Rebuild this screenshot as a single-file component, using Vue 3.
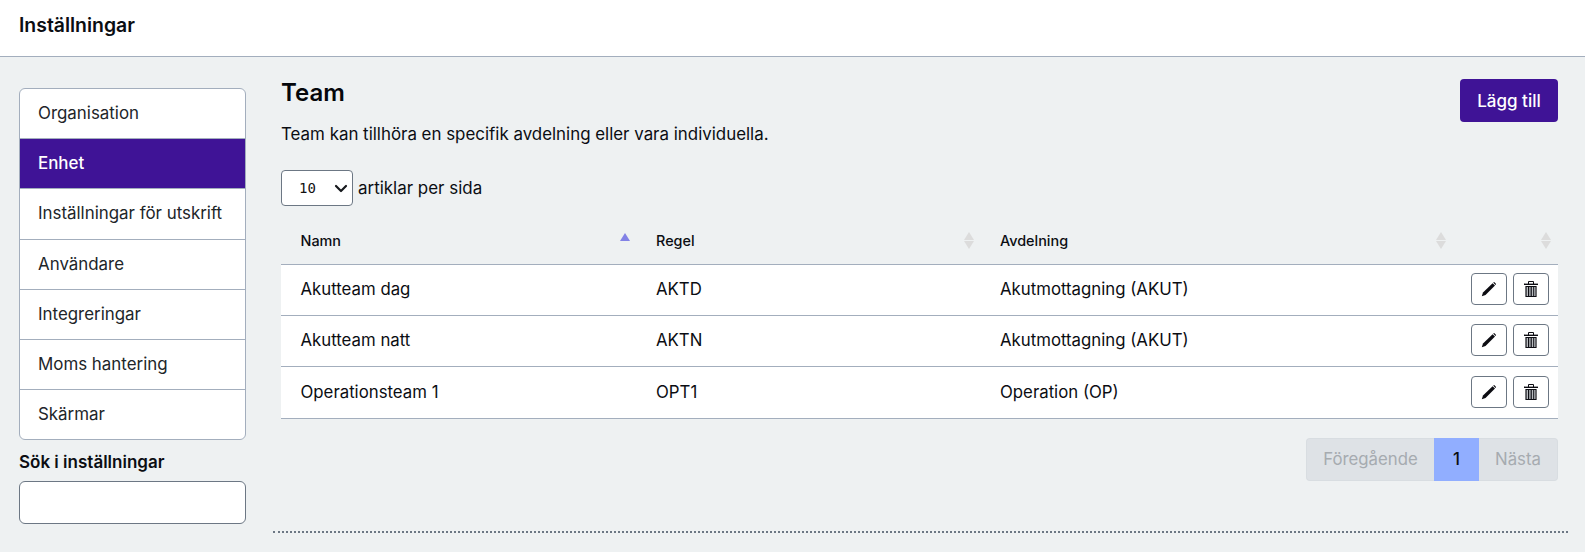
<script setup>
const nav = ['Organisation', 'Enhet', 'Inställningar för utskrift', 'Användare', 'Integreringar', 'Moms hantering', 'Skärmar']
const rows = [
  { name: 'Akutteam dag', rule: 'AKTD', dept: 'Akutmottagning (AKUT)' },
  { name: 'Akutteam natt', rule: 'AKTN', dept: 'Akutmottagning (AKUT)' },
  { name: 'Operationsteam 1', rule: 'OPT1', dept: 'Operation (OP)' }
]
const cols = [
  { label: 'Namn', active: true },
  { label: 'Regel' },
  { label: 'Avdelning' },
  { label: '' }
]
</script>

<template>
  <div class="page">
    <header class="topbar">Inställningar</header>
    <div class="body">
      <aside class="side">
        <ul class="nav">
          <li v-for="n in nav" :key="n" :class="{ on: n === 'Enhet' }">{{ n }}</li>
        </ul>
        <label class="search-label" for="s">Sök i inställningar</label>
        <input id="s" class="search" type="text" />
      </aside>
      <main class="main">
        <div class="head">
          <div>
            <h1>Team</h1>
            <p>Team kan tillhöra en specifik avdelning eller vara individuella.</p>
          </div>
          <button class="add">Lägg till</button>
        </div>
        <div class="perpage">
          <div class="select">
            <span>10</span>
            <svg width="16" height="16" viewBox="0 0 16 16"><path d="M3 6l5 5 5-5" fill="none" stroke="#16191d" stroke-width="2.2" stroke-linecap="round" stroke-linejoin="round"/></svg>
          </div>
          <span>artiklar per sida</span>
        </div>
        <table>
          <colgroup>
            <col class="c1" /><col class="c2" /><col class="c3" /><col />
          </colgroup>
          <thead>
            <tr>
              <th v-for="c in cols" :key="c.label">
                {{ c.label }}
                <span v-if="c.active" class="sort single"><i class="up act"></i></span>
                <span v-else class="sort"><i class="up"></i><i class="down"></i></span>
              </th>
            </tr>
          </thead>
          <tbody>
            <tr v-for="r in rows" :key="r.rule">
              <td>{{ r.name }}</td>
              <td>{{ r.rule }}</td>
              <td>{{ r.dept }}</td>
              <td class="acts">
                <button class="icon" aria-label="Redigera">
                  <svg width="16" height="16" viewBox="0 0 16 16"><path fill="#0c0c12" d="M0.8 15.2 2 11.6 11.6 2.2 14 4.6 4.5 14z"/><path fill="#0c0c12" d="M12.4 1.4a.9.9 0 0 1 1.3 0l1 1a.9.9 0 0 1 0 1.3l-.2.2-2.4-2.3z"/></svg>
                </button>
                <button class="icon" aria-label="Ta bort">
                  <svg width="16" height="16" viewBox="0 0 16 16">
                    <path fill="none" stroke="#0c0c12" stroke-width="1" d="M5.5 3V.5h5V3"/>
                    <path fill="#0c0c12" d="M1 2.6h14v1.4H1z"/>
                    <path fill="#0c0c12" d="M2.4 5h11.2v11H2.4z"/>
                    <path fill="#b9bcc0" d="M3.6 6h1.4v8.9H3.6zM6.2 6h1.4v8.9H6.2zM8.8 6h1.4v8.9H8.8zM11.2 6h1.3v8.9h-1.3z"/>
                  </svg>
                </button>
              </td>
            </tr>
          </tbody>
        </table>
        <div class="pager">
          <span class="pg first">Föregående</span>
          <span class="pg cur">1</span>
          <span class="pg last">Nästa</span>
        </div>
      </main>
    </div>
  </div>
</template>

<style>
html, body { margin: 0; background: #eef1f2; }
</style>

<style scoped>
.page { width: 1585px; height: 552px; overflow: hidden; background: #eef1f2; font-family: Inter, "Noto Sans", sans-serif; font-size: 16.8px; color: #0b0d12; }
.topbar { height: 56px; background: #fff; border-bottom: 1.5px solid #a3aebd; padding-left: 19px; line-height: 51px; font-weight: 600; font-size: 19.4px; }
.body { display: flex; align-items: flex-start; padding: 22px 18px 0 19px; }
.side { width: 227px; flex: none; margin-right: 27px; margin-top: 9px; }
.nav { list-style: none; margin: 0; padding: 0; background: #fff; border: 1px solid #a3aebd; border-radius: 6px; overflow: hidden; font-size: 16.9px; }
.nav li { height: 50.2px; line-height: 49px; box-sizing: border-box; padding-left: 18px; border-bottom: 1px solid #a3aebd; color: #212529; }
.nav li:last-child { height: 49px; border-bottom: 0; }
.nav li.on { background: #3f1396; color: #fff; font-weight: 500; }
.search-label { display: block; margin-top: 12px; font-weight: 600; line-height: 20px; font-size: 17px; }
.search { display: block; width: 100%; box-sizing: border-box; height: 43px; margin-top: 9px; background: #fff; border: 1px solid #6c7784; border-radius: 6px; padding: 0; }
.main { flex: 1; box-sizing: border-box; height: 454px; padding: 0 10px 0 8px; border-bottom: 2px dotted #6c7784; }
.head { display: flex; justify-content: space-between; align-items: flex-start; }
h1 { margin: -1.5px 0 0; font-size: 24px; font-weight: 600; line-height: 29px; color: #05070b; }
.head p { margin: 16.5px 0 0; line-height: 22px; font-size: 16.9px; }
.add { width: 98px; height: 43px; background: #3f1396; color: #fff; border: 0; border-radius: 4px; font: 500 17px Inter, sans-serif; }
.perpage { display: flex; align-items: center; gap: 5px; margin-top: 25px; height: 36px; font-size: 16.95px; }
.select { width: 72px; height: 36px; box-sizing: border-box; background: #fff; border: 1px solid #6c7784; border-radius: 4px; display: flex; align-items: center; justify-content: space-between; padding: 0 3px 0 17px; font: 14px "DejaVu Sans Mono", monospace; color: #111; }
table { width: 1277px; border-collapse: collapse; table-layout: fixed; margin-top: 12px; }
.c1 { width: 355.5px; }
.c2 { width: 344px; }
.c3 { width: 472px; }
th { position: relative; height: 45px; padding: 0 19.5px 1px; text-align: left; font-size: 14.4px; font-weight: 550; border-bottom: 1px solid #a3aebd; }
td { height: 48px; padding: 0 19.5px 2px; background: #fff; border-bottom: 1px solid #a3aebd; }
tr:last-child td { height: 49px; }
.sort { position: absolute; right: 7px; top: 14px; display: flex; flex-direction: column; gap: 1px; }
.sort.single { top: 15px; }
.sort i { display: block; width: 0; height: 0; border-left: 5.5px solid transparent; border-right: 5.5px solid transparent; }
.up { border-bottom: 8.5px solid #dcdcdc; }
.down { border-top: 8.5px solid #dcdcdc; }
.up.act { border-bottom: 8px solid #8282e6; }
.acts { padding: 0 9px 2px 0; text-align: right; white-space: nowrap; font-size: 0; }
.icon { width: 36px; height: 32px; margin-left: 6px; padding: 0; background: #fff; border: 1px solid #6c7784; border-radius: 4px; display: inline-flex; align-items: center; justify-content: center; vertical-align: middle; }
.pager { display: flex; justify-content: flex-end; margin-top: 18.5px; }
.pg { height: 43px; line-height: 41px; box-sizing: border-box; background: #dee2e6; color: #a6abb0; text-align: center; }
.first { width: 128px; border-radius: 4px 0 0 4px; border: 1px solid #d8dde1; border-right: 0; }
.cur { width: 45px; line-height: 43px; background: #91aeff; color: #0b0d12; font-weight: 500; }
.last { width: 79px; border-radius: 0 4px 4px 0; border: 1px solid #d8dde1; border-left: 0; }
</style>
